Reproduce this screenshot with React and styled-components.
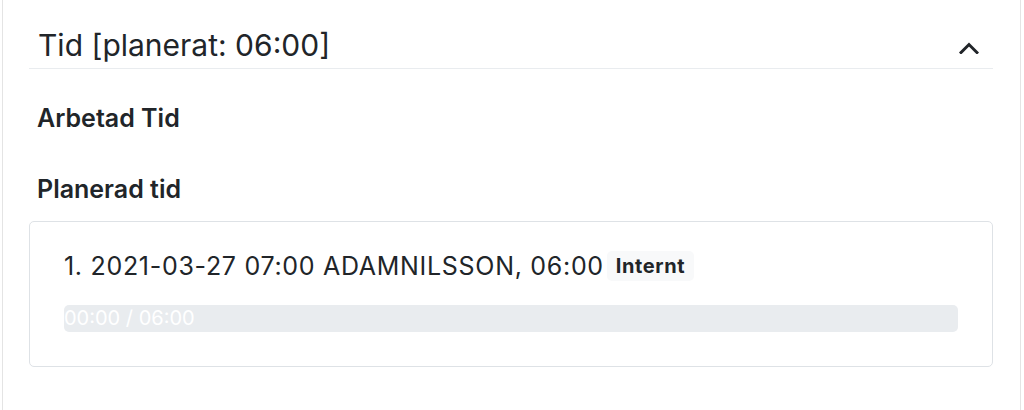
import React from 'react';
import styled, { createGlobalStyle } from 'styled-components';

const GlobalStyle = createGlobalStyle`
  body {
    margin: 0;
    background: #fff;
    font-family: Inter, "Noto Sans", sans-serif;
    color: #212529;
  }
`;

const Panel = styled.div`
  margin-left: 2px;
  width: 1019px;
  box-sizing: border-box;
  min-height: 410px;
  border-left: 1px solid #e4e4e4;
  border-right: 1px solid #e4e4e4;
  padding: 0 27px 0 26px;
`;

const Header = styled.div`
  display: flex;
  justify-content: space-between;
  align-items: center;
  padding: 27px 14px 5px 9px;
  border-bottom: 1px solid #e9ecef;
`;

const Title = styled.h4`
  margin: 0;
  font-size: 30px;
  line-height: 36px;
  font-weight: 400;
`;

const Chevron = styled.svg`
  width: 20px;
  height: 12px;
  margin-top: 6px;
`;

const SectionTitle = styled.h5`
  margin: ${(p) => p.$top}px 0 0 8px;
  font-size: 25px;
  line-height: 30px;
  font-weight: 600;
`;

const Card = styled.div`
  margin-top: 17px;
  border: 1px solid #dee2e6;
  border-radius: 5px;
  padding: 29px 34px 34px 34px;
`;

const Item = styled.div`
  display: flex;
  align-items: center;
  font-size: 25px;
  line-height: 30px;
  letter-spacing: 0.7px;
`;

const Badge = styled.span`
  margin-left: 3px;
  padding: 0 9px;
  font-size: 20px;
  line-height: 30px;
  font-weight: 700;
  letter-spacing: 0.6px;
  background: #f8f9fa;
  border-radius: 5px;
`;

const Track = styled.div`
  margin-top: 24px;
  height: 27px;
  border-radius: 5px;
  background: #e9ecef;
  color: #fff;
  font-size: 20px;
  line-height: 27px;
  overflow: hidden;
  white-space: nowrap;
`;

export default function App() {
  return (
    <>
      <GlobalStyle />
      <Panel>
        <Header>
          <Title>Tid [planerat: 06:00]</Title>
          <Chevron viewBox="0 0 20 12">
            <polyline points="2,10.5 10,2.5 18,10.5" fill="none" stroke="#212529" strokeWidth="3" strokeLinecap="square" />
          </Chevron>
        </Header>
        <SectionTitle $top={34}>Arbetad Tid</SectionTitle>
        <SectionTitle $top={41}>Planerad tid</SectionTitle>
        <Card>
          <Item>
            1. 2021-03-27 07:00 ADAMNILSSON, 06:00
            <Badge>Internt</Badge>
          </Item>
          <Track>00:00 / 06:00</Track>
        </Card>
      </Panel>
    </>
  );
}
